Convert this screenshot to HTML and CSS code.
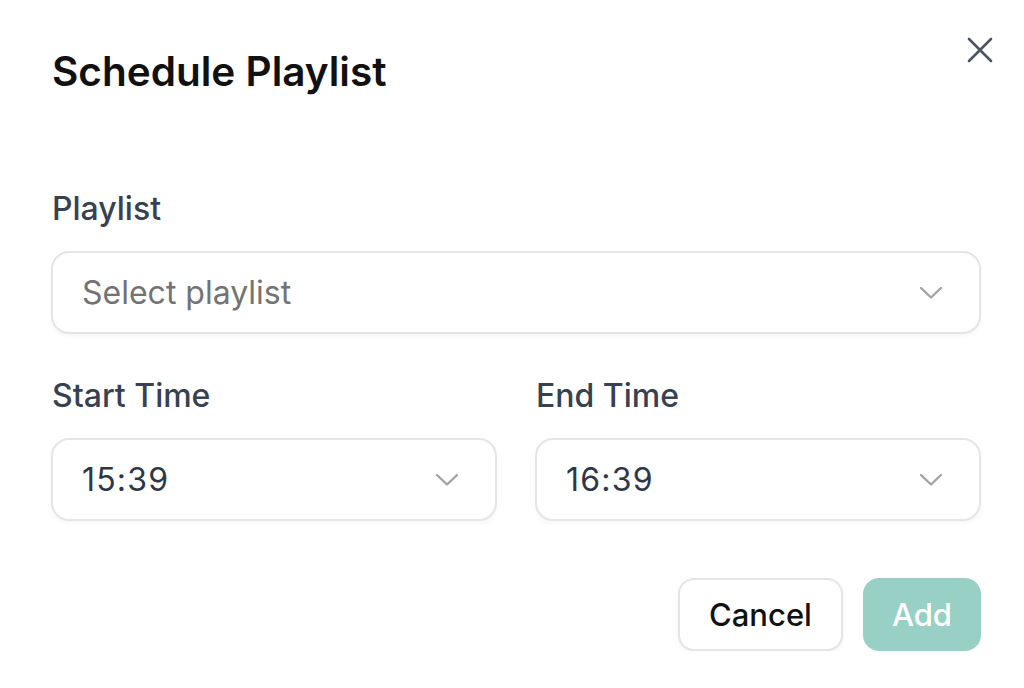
FILE: index.html
```html
<!DOCTYPE html>
<html lang="en">
<head>
    <meta charset="UTF-8">
    <meta name="viewport" content="width=device-width, initial-scale=1.0">
    <title>Schedule Playlist</title>
    <link rel="stylesheet" href="styles.css">
</head>
<body>

    <div class="dialog">
        <div class="dialog-header">
            <h2 class="title">Schedule Playlist</h2>
            <button type="button" class="close-btn" aria-label="Close">
                <svg width="26" height="26" viewBox="0 0 26 26">
                    <path d="M2 2 L24 24 M24 2 L2 24" stroke="#4b5563" stroke-width="2.6" stroke-linecap="round" fill="none"/>
                </svg>
            </button>
        </div>

        <div class="field">
            <label class="field-label">Playlist</label>
            <div class="select">
                <span class="placeholder">Select playlist</span>
                <svg class="chevron" width="24" height="14" viewBox="0 0 24 14">
                    <path d="M2 2 L12 11.5 L22 2" stroke="#a3a3a3" stroke-width="2.4" stroke-linecap="round" stroke-linejoin="round" fill="none"/>
                </svg>
            </div>
        </div>

        <div class="time-row">
            <div class="field">
                <label class="field-label">Start Time</label>
                <div class="select">
                    <span class="value">15:39</span>
                    <svg class="chevron" width="24" height="14" viewBox="0 0 24 14">
                        <path d="M2 2 L12 11.5 L22 2" stroke="#a3a3a3" stroke-width="2.4" stroke-linecap="round" stroke-linejoin="round" fill="none"/>
                    </svg>
                </div>
            </div>
            <div class="field">
                <label class="field-label">End Time</label>
                <div class="select">
                    <span class="value">16:39</span>
                    <svg class="chevron" width="24" height="14" viewBox="0 0 24 14">
                        <path d="M2 2 L12 11.5 L22 2" stroke="#a3a3a3" stroke-width="2.4" stroke-linecap="round" stroke-linejoin="round" fill="none"/>
                    </svg>
                </div>
            </div>
        </div>

        <div class="actions">
            <button type="button" class="btn btn-cancel">Cancel</button>
            <button type="button" class="btn btn-add" disabled>Add</button>
        </div>
    </div>

</body>
</html>
```

FILE: styles.css
```css
body {
    font-family: Inter, "Noto Sans", sans-serif;
    background-color: #ffffff;
    margin: 0;
    color: #111111;
}
.dialog {
    padding: 47px 43px 0 51px;
}
.dialog-header {
    display: flex;
    justify-content: space-between;
    align-items: flex-start;
}
.title {
    margin: 0 0 0 1px;
    font-size: 40.5px;
    line-height: 50px;
    font-weight: 600;
    color: #111111;
}
.close-btn {
    margin: -10px -12px 0 0;
    padding: 0;
    border: none;
    background: none;
    width: 26px;
    height: 26px;
    cursor: pointer;
}
.field {
    display: flex;
    flex-direction: column;
    flex: 1;
}
.dialog-header + .field {
    margin-top: 92px;
}
.field-label {
    margin-left: 1px;
    font-size: 32px;
    line-height: 40px;
    font-weight: 500;
    color: #374151;
}
.select {
    margin-top: 22px;
    height: 83px;
    box-sizing: border-box;
    border: 2px solid #e5e5e5;
    border-radius: 18px;
    padding: 0 36px 0 29px;
    display: flex;
    align-items: center;
    justify-content: space-between;
    box-shadow: 0 2px 4px rgba(0, 0, 0, 0.04);
}
.placeholder {
    font-size: 32px;
    color: #737373;
}
.value {
    font-size: 32px;
    letter-spacing: 1.2px;
    color: #2d3748;
}
.time-row {
    display: flex;
    gap: 38px;
    margin-top: 42px;
}
.actions {
    display: flex;
    justify-content: flex-end;
    gap: 20px;
    margin-top: 57px;
}
.btn {
    height: 73px;
    padding: 0 29px;
    border-radius: 16px;
    font-family: Inter, "Noto Sans", sans-serif;
    font-size: 31px;
    font-weight: 500;
    cursor: pointer;
}
.btn-cancel {
    background-color: #ffffff;
    border: 2px solid #e5e5e5;
    color: #111111;
    box-shadow: 0 2px 4px rgba(0, 0, 0, 0.05);
}
.btn-add {
    background-color: #99d0c5;
    border: none;
    color: #ffffff;
    cursor: not-allowed;
}
```
